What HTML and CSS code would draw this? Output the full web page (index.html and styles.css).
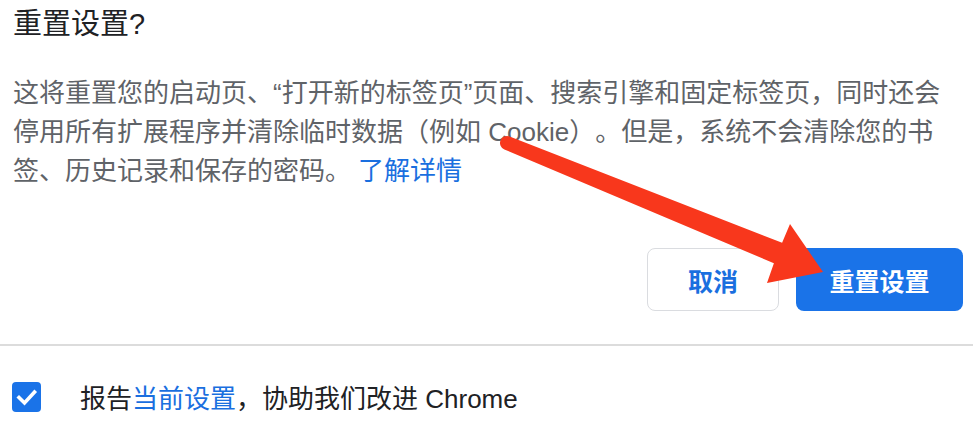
FILE: index.html
```html
<!DOCTYPE html>
<html lang="zh-CN">
<head>
<meta charset="utf-8">
<title>重置设置</title>
<link rel="stylesheet" href="styles.css">
</head>
<body>
<div class="page">
  <section class="dialog">
    <h1 class="title">重置设置?</h1>
    <p class="desc">这将重置您的启动页、“打开新的标签页”页面、搜索引擎和固定标签页，同时还会停用所有扩展程序并清除临时数据（例如 Cookie）。但是，系统不会清除您的书签、历史记录和保存的密码。<a class="link" href="#">了解详情</a></p>
    <div class="actions">
      <button class="btn btn-cancel">取消</button>
      <button class="btn btn-primary">重置设置</button>
    </div>
  </section>
  <div class="divider"></div>
  <label class="report">
    <span class="checkbox">
      <svg viewBox="0 0 29 30" width="29" height="30"><polyline points="7,15.5 12.5,21 22.5,10" fill="none" stroke="#fff" stroke-width="3.6" stroke-linecap="square"/></svg>
    </span>
    <span class="report-text">报告<a class="link" href="#">当前设置</a>，协助我们改进 Chrome</span>
  </label>
  <svg class="arrow" viewBox="0 0 973 434" width="973" height="434">
    <path d="M509.6,136.5 L782.1,242.8 L790,224 L823,272 L767,283 L773.9,263.2 L504.4,149.5 A7,7 0 0 1 509.6,136.5 Z" fill="#f8371c"/>
  </svg>
</div>
</body>
</html>
```
FILE: styles.css
```css
html, body {
  margin: 0;
  padding: 0;
  background: #ffffff;
}

.page {
  position: relative;
  width: 973px;
  height: 434px;
  overflow: hidden;
  font-family: "Liberation Sans", "Noto Sans CJK SC", sans-serif;
  text-spacing-trim: space-all;
}

.dialog {
  display: flex;
  flex-direction: column;
}

.title {
  margin: 0;
  padding: 6px 13px 0;
  font-size: 29px;
  line-height: 36px;
  font-weight: 400;
  color: #202124;
}

.desc {
  margin: 32px 0 0;
  padding: 0 28px 0 13px;
  font-size: 26px;
  line-height: 39px;
  color: #5f6368;
}

.desc .link {
  margin-left: 7px;
}

.link {
  color: #1a6fdf;
  text-decoration: none;
}

.actions {
  display: flex;
  justify-content: flex-end;
  gap: 17px;
  margin-top: 57px;
  padding-right: 10px;
}

.btn {
  height: 63px;
  border-radius: 8px;
  font-family: inherit;
  font-size: 25px;
  font-weight: 700;
  cursor: pointer;
}

.btn-cancel {
  width: 132px;
  background: #ffffff;
  border: 1.5px solid #dadce0;
  color: #1a6fdf;
}

.btn-primary {
  width: 167px;
  background: #1a73e8;
  border: none;
  color: #ffffff;
}

.divider {
  margin-top: 33px;
  height: 2px;
  background: #dcdcdc;
}

.report {
  display: flex;
  align-items: center;
  gap: 39px;
  margin-top: 32px;
  padding-left: 12px;
  font-size: 26px;
  color: #202124;
}

.checkbox {
  display: flex;
  width: 29px;
  height: 30px;
  border-radius: 4px;
  background: #1a73e8;
}

.arrow {
  position: absolute;
  left: 0;
  top: 0;
  pointer-events: none;
}
```
